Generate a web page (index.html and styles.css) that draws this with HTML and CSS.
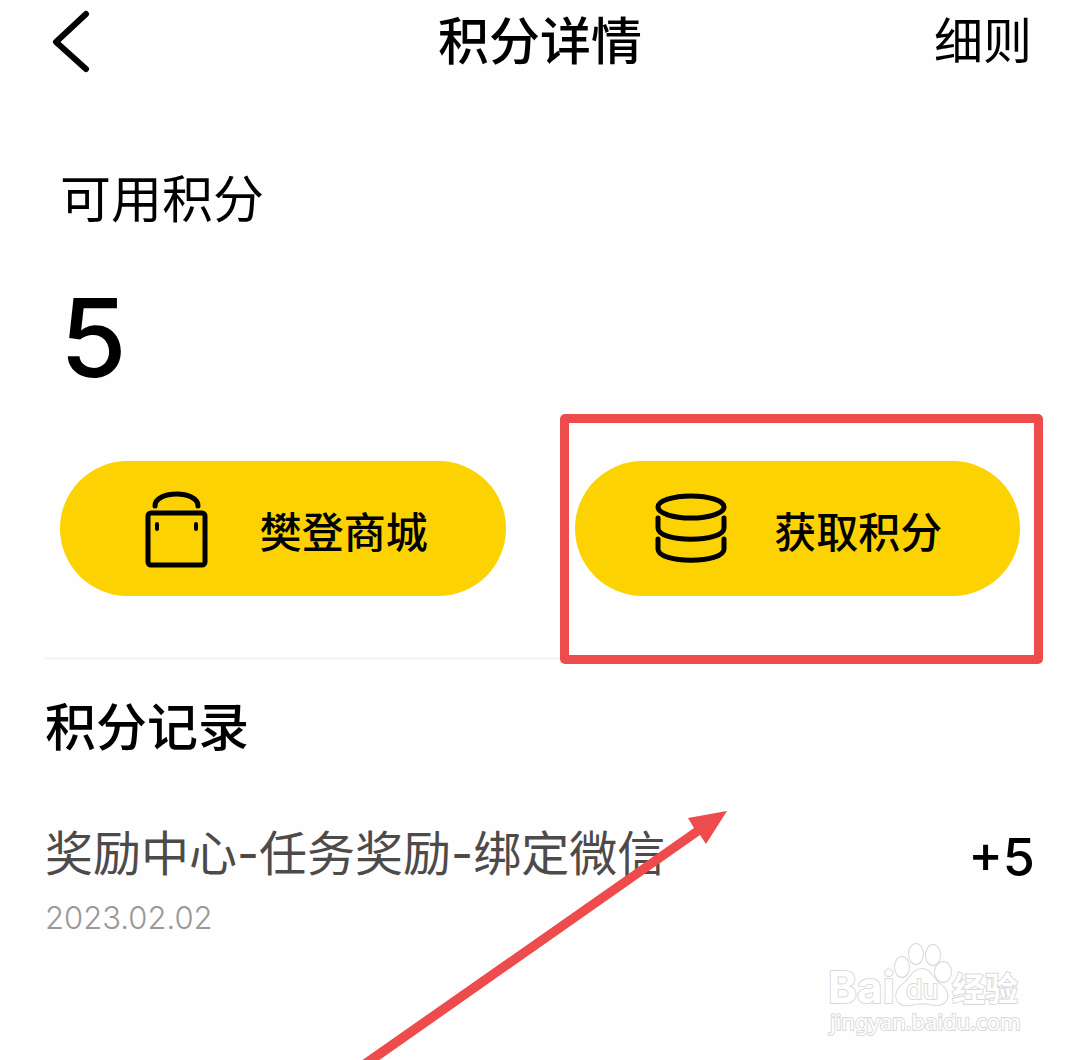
FILE: index.html
```html
<!DOCTYPE html>
<html lang="zh-CN">
<head>
<meta charset="utf-8">
<meta name="viewport" content="width=device-width, initial-scale=1">
<title>积分详情</title>
<link rel="stylesheet" href="styles.css">
</head>
<body>
<div class="page">
  <header class="topbar">
    <button class="back" type="button" aria-label="返回">
      <svg width="40" height="64" viewBox="0 0 40 64"><path d="M34 4 L4 32 L34 59" fill="none" stroke="#000" stroke-width="6" stroke-linecap="round" stroke-linejoin="round"/></svg>
    </button>
    <h1 class="title">积分详情</h1>
    <a class="rules" href="#rules">细则</a>
  </header>

  <main>
    <section class="balance">
      <p class="balance-label">可用积分</p>
      <p class="balance-value">5</p>
      <div class="actions">
        <button class="pill" type="button">
          <svg class="pill-icon" width="72" height="76" viewBox="0 0 72 76" fill="none" stroke="#000" stroke-width="5" stroke-linecap="round" stroke-linejoin="round">
            <rect x="8" y="21" width="57" height="52" rx="3"/>
            <path d="M15 14 C15 -2 58 -2 58 14" />
            <path d="M17 32 V37 M56 32 V37" stroke-width="4"/>
          </svg>
          <span>樊登商城</span>
        </button>
        <div class="highlight">
          <button class="pill" type="button">
            <svg class="pill-icon" width="72" height="76" viewBox="0 0 72 76" fill="none" stroke="#000" stroke-width="5" stroke-linecap="round" stroke-linejoin="round">
              <ellipse cx="37" cy="15" rx="33" ry="11"/>
              <path d="M4 26 V36 C4 51 70 51 70 36 V26 M4 47 V57 C4 72 70 72 70 57 V47"/>
            </svg>
            <span>获取积分</span>
          </button>
        </div>
      </div>
    </section>

    <section class="records">
      <h2 class="records-title">积分记录</h2>
      <ul class="record-list">
        <li class="record">
          <div>
            <p class="record-name">奖励中心-任务奖励-绑定微信</p>
            <time class="record-date" datetime="2023-02-02">2023.02.02</time>
          </div>
          <strong class="record-points">+5</strong>
        </li>
      </ul>
    </section>
  </main>

  <svg class="arrow" width="380" height="260" viewBox="0 0 380 260" aria-hidden="true">
    <path d="M0 261 L333 28 L327 18 L366 11 L345 44 L339 35 L17 261 Z" fill="#ee4b4c"/>
  </svg>

  <svg class="watermark" width="210" height="106" viewBox="0 0 210 106">
    <g class="mark">
      <text class="mark-latin" x="4" y="65">Bai</text>
      <ellipse cx="78" cy="29" rx="7" ry="10"/>
      <ellipse cx="92" cy="16" rx="7" ry="10"/>
      <ellipse cx="109" cy="17" rx="7" ry="10"/>
      <ellipse cx="119" cy="34" rx="8" ry="10"/>
      <path d="M98 31 C107 31 109 41 116 46 C129 56 123 68 111 67 C102 65 95 65 86 67 C73 69 67 57 78 47 C86 41 89 31 98 31 Z"/>
      <text class="mark-du" x="82" y="61">du</text>
      <text class="mark-cjk" x="128" y="63">经验</text>
      <text class="mark-url" x="6" y="92">jingyan.baidu.com</text>
    </g>
  </svg>
</div>
</body>
</html>
```
FILE: styles.css
```css
* {
  box-sizing: border-box;
}

body {
  margin: 0;
  background: #fefefe;
  color: #000;
  font-family: Inter, "Noto Sans CJK SC", sans-serif;
}

h1, h2, p, ul {
  margin: 0;
  padding: 0;
}

button {
  border: 0;
  padding: 0;
  background: none;
  color: inherit;
  font: inherit;
}

.page {
  position: relative;
  min-height: 100vh;
  overflow: hidden;
}

.topbar {
  display: grid;
  grid-template-columns: 1fr auto 1fr;
  align-items: center;
  height: 84px;
  padding: 0 48px 0 52px;
}

.back {
  display: flex;
  justify-self: start;
}

.title,
.records-title {
  font-size: 51px;
  line-height: 76px;
  font-weight: 500;
}

.title {
  margin-right: 4px;
}

.rules {
  justify-self: end;
  color: inherit;
  font-size: 49px;
  line-height: 76px;
  text-decoration: none;
}

.balance {
  padding: 78px 60px 61px;
}

.balance-label {
  font-size: 51px;
  line-height: 76px;
}

.balance-value {
  margin-top: 34px;
  font-size: 108px;
  line-height: 132px;
  font-weight: 500;
}

.actions {
  display: grid;
  grid-template-columns: 1fr 1fr;
  gap: 69px;
  margin-top: 57px;
}

.pill {
  display: flex;
  align-items: center;
  justify-content: center;
  gap: 48px;
  width: 100%;
  height: 135px;
  padding: 2px 0 0 2px;
  border-radius: 68px;
  background: #fcd202;
  font-size: 42px;
  font-weight: 500;
}

.pill-icon {
  overflow: visible;
}

.highlight {
  position: relative;
}

.highlight::after {
  content: "";
  position: absolute;
  inset: -47px -23px -68px -15px;
  border: 9px solid #ee4b4c;
  border-radius: 5px;
  pointer-events: none;
}

.records {
  margin: 0 45px;
  padding-top: 30px;
  border-top: 3px solid #f6f6f6;
}

.record-list {
  margin-top: 50px;
  list-style: none;
}

.record {
  display: flex;
  align-items: flex-start;
  justify-content: space-between;
}

.record-name {
  color: #4d4b4a;
  font-size: 48px;
  line-height: 76px;
}

.record-date {
  display: block;
  margin-top: 6px;
  color: #999;
  font-size: 31px;
  line-height: 40px;
  font-weight: 300;
}

.record-points {
  padding-top: 4px;
  font-size: 52px;
  line-height: 76px;
  font-weight: 500;
}

.arrow {
  position: absolute;
  left: 361px;
  top: 800px;
}

.watermark {
  position: absolute;
  right: 46px;
  bottom: 16px;
}

.mark {
  fill: #fff;
  stroke: #d9d9d9;
  stroke-width: 2px;
  paint-order: stroke;
}

.mark-latin {
  font: 700 44px Inter, sans-serif;
}

.mark-du {
  font: 400 27px Inter, sans-serif;
}

.mark-cjk {
  font: 700 33px "Noto Sans CJK SC", sans-serif;
}

.mark-url {
  font: 400 22px "Noto Sans", sans-serif;
}
```
